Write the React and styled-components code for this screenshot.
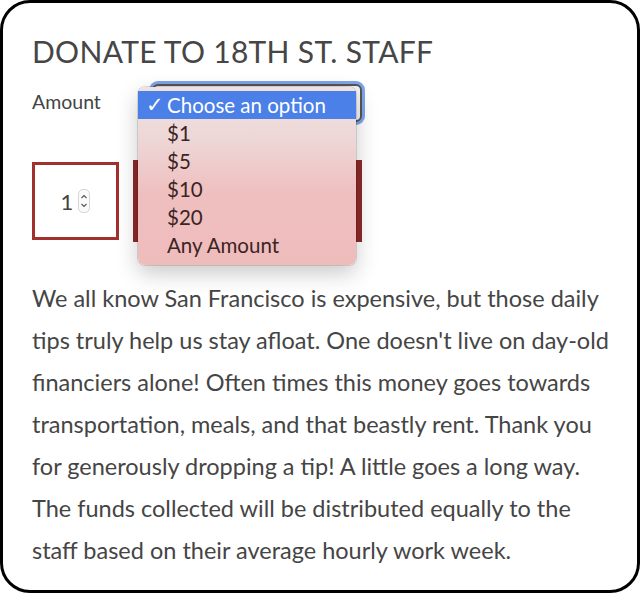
import styled, { createGlobalStyle } from "styled-components";

const GlobalStyle = createGlobalStyle`
  html, body {
    margin: 0;
    padding: 0;
    background: #ffffff;
  }
  body {
    font-family: Lato, "Noto Sans", sans-serif;
  }
`;

const Card = styled.div`
  box-sizing: border-box;
  width: 640px;
  height: 593px;
  border: 3px solid #000;
  border-radius: 30px;
  padding: 30px 29px 0;
  color: #454545;
  overflow: hidden;
`;

const Title = styled.h1`
  margin: 0;
  font-size: 30px;
  font-weight: 400;
  line-height: 36px;
  letter-spacing: 0.3px;
  color: #464646;
`;

const AmountRow = styled.div`
  display: flex;
  align-items: center;
  margin-top: 14px;
  height: 40px;
`;

const Label = styled.label`
  font-size: 19.5px;
  width: 120px;
  padding-bottom: 3px;
  color: #444;
`;

const SelectWrap = styled.div`
  position: relative;
`;

const SelectBox = styled.div`
  box-sizing: border-box;
  width: 210px;
  height: 38px;
  border: 2px solid #555;
  border-radius: 6px;
  box-shadow: 0 0 0 3px #7ea4ea;
  background: #f4f4f4;
`;

const Menu = styled.ul`
  position: absolute;
  left: -14px;
  top: 3px;
  width: 218px;
  margin: 0;
  padding: 4px 0 6px;
  list-style: none;
  border-radius: 7px;
  background: linear-gradient(180deg, #efe2e2 0%, #eed6d6 30%, #efbfbf 60%, #efbcbc 100%);
  box-shadow: 0 0 0 1px rgba(0, 0, 0, 0.12), 0 8px 22px rgba(0, 0, 0, 0.22);
  z-index: 5;
`;

const Option = styled.li`
  display: flex;
  align-items: center;
  height: 28px;
  padding-left: 8px;
  font-size: 20.5px;
  color: ${(p) => (p.$active ? "#ffffff" : "#3b2424")};
  background: ${(p) => (p.$active ? "#4a80e8" : "transparent")};
`;

const Check = styled.span`
  display: inline-block;
  width: 21px;
  font-size: 21px;
  font-family: "DejaVu Sans", sans-serif;
`;

const BuyRow = styled.div`
  display: flex;
  align-items: center;
  gap: 14px;
  margin-top: 37px;
`;

const QtyBox = styled.div`
  box-sizing: border-box;
  width: 87px;
  height: 78px;
  border: 3px solid #a1302f;
  display: flex;
  align-items: center;
  justify-content: center;
  gap: 5px;
  font-size: 22px;
  color: #444;
`;

const Spinner = styled.span`
  display: inline-flex;
  flex-direction: column;
  align-items: center;
  justify-content: center;
  width: 10px;
  height: 22px;
  border: 1px solid #d6d6d6;
  border-radius: 5px;
  background: #fafafa;
`;

const DonateButton = styled.button`
  width: 229px;
  height: 82px;
  border: none;
  background: #8e2a2a;
  color: #fff;
  font-family: inherit;
  font-size: 18px;
  letter-spacing: 1px;
`;

const Body = styled.p`
  margin: 35px 0 0;
  font-size: 23.5px;
  line-height: 42px;
  white-space: nowrap;
  color: #454545;
`;

const lines = [
  "We all know San Francisco is expensive, but those daily",
  "tips truly help us stay afloat. One doesn't live on day-old",
  "financiers alone! Often times this money goes towards",
  "transportation, meals, and that beastly rent. Thank you",
  "for generously dropping a tip! A little goes a long way.",
  "The funds collected will be distributed equally to the",
  "staff based on their average hourly work week.",
];

const options = ["$1", "$5", "$10", "$20", "Any Amount"];

export default function App() {
  return (
    <>
      <GlobalStyle />
      <Card>
        <Title>DONATE TO 18TH ST. STAFF</Title>
        <AmountRow>
          <Label>Amount</Label>
          <SelectWrap>
            <SelectBox />
            <Menu>
              <Option $active>
                <Check>✓</Check>Choose an option
              </Option>
              {options.map((o) => (
                <Option key={o}>
                  <Check />
                  {o}
                </Option>
              ))}
            </Menu>
          </SelectWrap>
        </AmountRow>
        <BuyRow>
          <QtyBox>
            1
            <Spinner>
              <svg width="8" height="18" viewBox="0 0 8 18">
                <path d="M1.5 6 L4 3.5 L6.5 6" fill="none" stroke="#555" strokeWidth="1.1" />
                <path d="M1.5 12 L4 14.5 L6.5 12" fill="none" stroke="#555" strokeWidth="1.1" />
              </svg>
            </Spinner>
          </QtyBox>
          <DonateButton>DONATE</DonateButton>
        </BuyRow>
        <Body>
          {lines.map((l, i) => (
            <span key={i}>
              {l}
              {i < lines.length - 1 && <br />}
            </span>
          ))}
        </Body>
      </Card>
    </>
  );
}
